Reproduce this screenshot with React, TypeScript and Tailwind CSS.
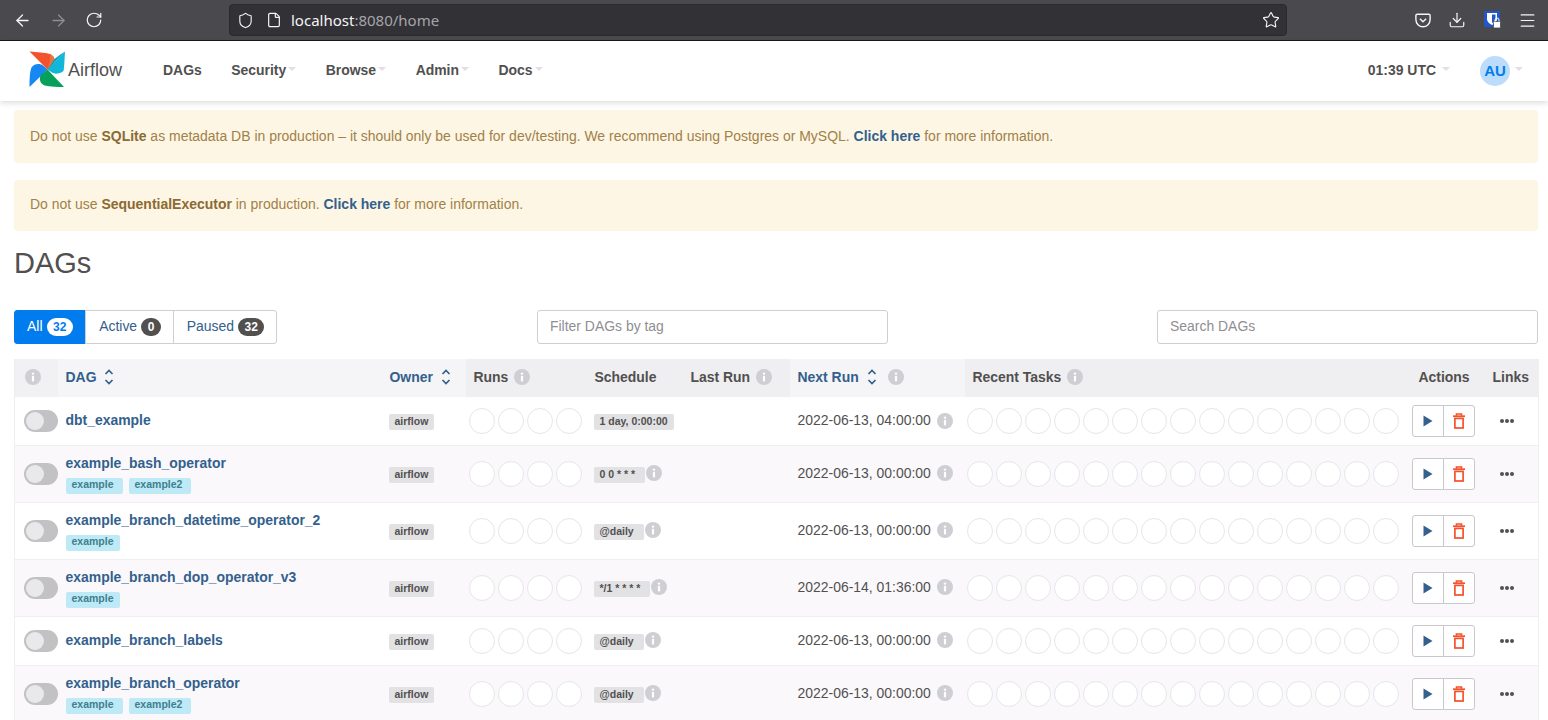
import { ArrowLeft, ArrowRight, RotateCw, Shield, File, Star, Download, Menu } from "lucide-react";

interface DagRow {
  name: string;
  tags: string[];
  schedule: string;
  scheduleInfo: boolean;
  nextRun: string;
}

const dags: DagRow[] = [
  { name: "dbt_example", tags: [], schedule: "1 day, 0:00:00", scheduleInfo: false, nextRun: "2022-06-13, 04:00:00" },
  { name: "example_bash_operator", tags: ["example", "example2"], schedule: "0 0 * * *", scheduleInfo: true, nextRun: "2022-06-13, 00:00:00" },
  { name: "example_branch_datetime_operator_2", tags: ["example"], schedule: "@daily", scheduleInfo: true, nextRun: "2022-06-13, 00:00:00" },
  { name: "example_branch_dop_operator_v3", tags: ["example"], schedule: "*/1 * * * *", scheduleInfo: true, nextRun: "2022-06-14, 01:36:00" },
  { name: "example_branch_labels", tags: [], schedule: "@daily", scheduleInfo: true, nextRun: "2022-06-13, 00:00:00" },
  { name: "example_branch_operator", tags: ["example", "example2"], schedule: "@daily", scheduleInfo: true, nextRun: "2022-06-13, 00:00:00" },
];

function Caret() {
  return <span className="ml-[2px] inline-block h-0 w-0 -translate-y-[2px] border-x-[4px] border-t-[4px] border-x-transparent border-t-[#e8dce8] align-middle" />;
}

function InfoIcon() {
  return (
    <svg width="16" height="16" viewBox="0 0 16 16" className="shrink-0">
      <circle cx="8" cy="8" r="8" fill="#cfced3" />
      <circle cx="8" cy="4.6" r="1.2" fill="#fff" />
      <rect x="6.9" y="6.8" width="2.2" height="5.6" fill="#fff" />
    </svg>
  );
}

function SortIcon() {
  return (
    <svg width="12" height="18" viewBox="0 0 12 18" fill="none" stroke="#33608c" strokeWidth="1.7" className="shrink-0">
      <path d="M2.5 6 L6 2.5 L9.5 6" />
      <path d="M2.5 12 L6 15.5 L9.5 12" />
    </svg>
  );
}

function Logo() {
  return (
    <svg width="37" height="37" viewBox="29 50.5 37 37" className="-mt-[2px] shrink-0">
      <path d="M29.5 51 C37 52 45 52 50 53.5 C54 55 56 60 53.5 63 L47.5 69 Z" fill="#f2532d" />
      <path d="M50 53.5 C54 55 56 60 53.5 63 L47.5 69 L50 60 Z" fill="#e8763a" />
      <path d="M65 51 C64.5 58 64.5 66 63.5 70.5 C60 73.5 54 74 52 72 L47.5 69 Z" fill="#11b6d9" />
      <path d="M65 51 L47.5 69 L53 61 C54 58 59 55 65 51 Z" fill="#0ca0c6" />
      <path d="M29.5 86.5 C29.5 80 29.5 72 31.5 67 C34 63 40 62.5 43 65 L47.5 69 Z" fill="#1687f5" />
      <path d="M64 86.5 C58 86.5 50 86.5 44.5 85 C40 83 38.5 78 41 74.5 L47.5 69 Z" fill="#06a05a" />
    </svg>
  );
}

function PocketIcon() {
  return (
    <svg width="16" height="15" viewBox="0 0 18 16" fill="none" stroke="#f5f5f7" strokeWidth="1.6">
      <path d="M2.5 1 H15.5 A1.5 1.5 0 0 1 17 2.5 V7 A8 8 0 0 1 1 7 V2.5 A1.5 1.5 0 0 1 2.5 1 Z" />
      <path d="M5.5 6 L9 9.5 L12.5 6" />
    </svg>
  );
}

function BitwardenIcon() {
  return (
    <svg width="18" height="18" viewBox="0 0 18 18">
      <rect width="16" height="16" fill="#2257c9" />
      <path d="M3 2 H13 V8 C13 11 10 13 8 14 C6 13 3 11 3 8 Z" fill="#fff" />
      <path d="M8 3.5 H11.5 V8 C11.5 9.5 10 11 8 12 Z" fill="#2257c9" />
      <rect x="9.5" y="10.5" width="7" height="6.5" rx="1" fill="#fff" stroke="#4a494e" strokeWidth="0.8" />
      <path d="M11 10.5 V9 A2 2 0 0 1 15 9 V10.5" fill="none" stroke="#f5f5f7" strokeWidth="1" />
    </svg>
  );
}

function TrashIcon() {
  return (
    <svg width="14" height="16" viewBox="0 0 14 16" fill="none" stroke="#f5512c" strokeWidth="1.7">
      <path d="M1 3.2 H13" />
      <path d="M4.5 2.8 V1 H9.5 V2.8" />
      <rect x="2.9" y="5.4" width="8.2" height="9.6" />
    </svg>
  );
}

function Circles({ count, className }: { count: number; className: string }) {
  return (
    <div className={className}>
      {Array.from({ length: count }).map((_, i) => (
        <span key={i} className="h-[26px] w-[26px] rounded-full border border-[#e6e5e8] bg-white" />
      ))}
    </div>
  );
}

function Pill({ text, className }: { text: string; className?: string }) {
  return (
    <span className={`inline-block h-[16px] translate-y-[1px] rounded-[2px] bg-[#e2e1e4] pl-[6px] text-[10.5px] font-bold leading-[14px] text-[#51504f] ${className ?? "pr-[6px]"}`}>
      {text}
    </span>
  );
}

function Tab({ label, count, active, className }: { label: string; count: number; active?: boolean; className: string }) {
  return (
    <div className={`flex h-[34px] items-center justify-center gap-[4px] border pb-[1px] ${className} ${active ? "border-[#017cee] bg-[#017cee] text-white" : "border-[#cfced2] bg-white text-[#33608c]"}`}>
      {label}
      <span className={`rounded-full px-[6.5px] text-[12px] font-bold leading-[18px] ${active ? "bg-white text-[#017cee]" : "bg-[#51504f] text-white"}`}>{count}</span>
    </div>
  );
}

export default function App() {
  const th = "h-[38px] px-2 pb-[2px] text-left text-[13.95px] font-bold";
  const td = "border-b border-[#efeef1] align-middle";

  return (
    <div className="h-[720px] overflow-hidden bg-white font-['Liberation_Sans',Arial,sans-serif] text-[13.95px] text-[#51504f]">
      {/* browser toolbar */}
      <div className="flex h-[41px] items-center border-b border-[#17171a] bg-[#4a494e] text-[#f5f5f7]">
        <div className="flex w-[229px] items-center pl-[13px]">
          <ArrowLeft size={19} strokeWidth={1.6} />
          <ArrowRight size={19} strokeWidth={1.6} className="ml-[17px] text-[#8e8d92]" />
          <RotateCw size={18} strokeWidth={1.6} className="ml-[17px]" />
        </div>
        <div className="flex h-[32px] w-[1058px] items-center rounded-[4px] border border-[#2a2a2e] bg-[#323136] pl-[7px] pr-[6px]">
          <Shield size={17} strokeWidth={1.6} />
          <File size={16} strokeWidth={1.8} className="ml-[12px]" />
          <span className="ml-[9px] font-['Noto_Sans',sans-serif] text-[15px]">
            localhost<span className="text-[#a6a5aa]">:8080/home</span>
          </span>
          <Star size={18} strokeWidth={1.5} className="ml-auto" />
        </div>
        <div className="ml-[128px] flex items-center">
          <PocketIcon />
          <Download size={18} strokeWidth={1.6} className="ml-[17px]" />
          <span className="ml-[18px]"><BitwardenIcon /></span>
          <Menu size={19} strokeWidth={1.5} className="ml-[16px]" />
        </div>
      </div>

      {/* navbar */}
      <nav className="flex h-[60px] items-center bg-white pb-[2px] pl-[29px] pr-[25px] font-bold shadow-[0_2px_6px_rgba(0,0,0,0.14)]">
        <Logo />
        <span className="ml-[2px] text-[18px] font-normal text-[#51504f]">Airflow</span>
        <div className="ml-[41px] flex items-center gap-[29.5px]">
          <span>DAGs</span>
          <span>Security<Caret /></span>
          <span>Browse<Caret /></span>
          <span>Admin<Caret /></span>
          <span>Docs<Caret /></span>
        </div>
        <span className="ml-auto">01:39 UTC</span>
        <span className="ml-[4px]"><Caret /></span>
        <span className="ml-[30px] mt-[2px] flex h-[30px] w-[30px] items-center justify-center rounded-full bg-[#bcdcfb] text-[15px] text-[#017cee]">AU</span>
        <span className="ml-[3px]"><Caret /></span>
      </nav>

      <main className="pl-[14px] pr-[10px]">
        <div className="mt-[9px] flex h-[53px] items-center rounded-[4px] bg-[#fef6e4] px-[16px] text-[13.97px] text-[#a08148]">
          <p>
            Do not use <b className="text-[#8b6a33]">SQLite</b> as metadata DB in production – it should only be used for dev/testing. We recommend using Postgres or MySQL.{" "}
            <b className="text-[#33608c]">Click here</b> for more information.
          </p>
        </div>
        <div className="mt-[17px] flex h-[51px] items-center rounded-[4px] bg-[#fef6e4] px-[16px] pb-[2px] text-[13.97px] text-[#a08148]">
          <p>
            Do not use <b className="text-[#8b6a33]">SequentialExecutor</b> in production. <b className="text-[#33608c]">Click here</b> for more information.
          </p>
        </div>

        <h1 className="mt-[14px] text-[29px] leading-[36px]">DAGs</h1>

        <div className="mt-[29px] flex items-center">
          <div className="flex">
            <Tab label="All" count={32} active className="w-[72px] rounded-l-[3px]" />
            <Tab label="Active" count={0} className="-ml-px w-[89px] pl-[1px]" />
            <Tab label="Paused" count={32} className="-ml-px w-[104px] rounded-r-[3px] pl-[1px]" />
          </div>
          <input readOnly placeholder="Filter DAGs by tag" className="ml-[260px] h-[34px] w-[351px] rounded-[3px] border border-[#cfced2] px-[12px] pb-[2px] text-[13.95px] placeholder:text-[#8f8e92]" />
          <input readOnly placeholder="Search DAGs" className="ml-auto h-[34px] w-[381px] rounded-[3px] border border-[#cfced2] px-[12px] pb-[2px] text-[13.95px] placeholder:text-[#8f8e92]" />
        </div>

        <table className="mt-[15px] w-[1524px] table-fixed border-x border-[#efeef1]">
          <colgroup>
            <col className="w-[43px]" />
            <col className="w-[324px]" />
            <col className="w-[84px]" />
            <col className="w-[121px]" />
            <col className="w-[96px]" />
            <col className="w-[107px]" />
            <col className="w-[175px]" />
            <col className="w-[446px]" />
            <col className="w-[74px]" />
            <col className="w-[54px]" />
          </colgroup>
          <thead>
            <tr>
              <th className={`${th} bg-[#f1f0f3] pl-[10px]`}><InfoIcon /></th>
              <th className={`${th} bg-[#f5f4f6] text-[#33608c]`}>
                <span className="flex items-center gap-[7px]">DAG <SortIcon /></span>
              </th>
              <th className={`${th} bg-[#f5f4f6] text-[#33608c]`}>
                <span className="flex items-center gap-[7px]">Owner <SortIcon /></span>
              </th>
              <th className={`${th} bg-[#efeef1]`}>
                <span className="flex items-center gap-[6px]">Runs <InfoIcon /></span>
              </th>
              <th className={`${th} bg-[#efeef1]`}>Schedule</th>
              <th className={`${th} bg-[#efeef1]`}>
                <span className="flex items-center gap-[6px]">Last Run <InfoIcon /></span>
              </th>
              <th className={`${th} bg-[#f5f4f6] text-[#33608c]`}>
                <span className="flex items-center gap-[7px]">Next Run <SortIcon /><span className="ml-[3px]"><InfoIcon /></span></span>
              </th>
              <th className={`${th} bg-[#efeef1]`}>
                <span className="flex items-center gap-[6px]">Recent Tasks <InfoIcon /></span>
              </th>
              <th className={`${th} bg-[#efeef1]`}>Actions</th>
              <th className={`${th} bg-[#efeef1]`}>Links</th>
            </tr>
          </thead>
          <tbody>
            {dags.map((dag, i) => (
              <tr key={dag.name} className={`${dag.tags.length ? "h-[57px]" : i === 0 ? "h-[48px]" : "h-[49px]"} ${i % 2 ? "bg-[#faf8fb]" : "bg-white"}`}>
                <td className={`${td} pl-[9px]`}>
                  <div className="relative h-[22px] w-[34px] rounded-full bg-[#c2c1c4]">
                    <span className="absolute left-[2px] top-[2px] h-[18px] w-[18px] rounded-full bg-[#e9e8eb]" />
                  </div>
                </td>
                <td className={`${td} px-2 ${dag.tags.length ? "" : "pb-[2px]"}`}>
                  <div className="text-[13.95px] font-bold leading-[20px] text-[#33608c]">{dag.name}</div>
                  {dag.tags.length > 0 && (
                    <div className="mt-[5px] flex gap-[6px]">
                      {dag.tags.map((tag) => (
                        <span key={tag} className={`h-[16px] rounded-[2px] bg-[#bdeaf6] pl-[6px] text-[10.5px] font-bold leading-[13px] text-[#3f7f8e] ${dag.tags.length > 1 ? "pr-[9px]" : "pr-[6px]"}`}>
                          {tag}
                        </span>
                      ))}
                    </div>
                  )}
                </td>
                <td className={`${td} pl-[7px]`}>
                  <div className="flex"><Pill text="airflow" /></div>
                </td>
                <td className={td}><Circles count={4} className="flex gap-[3px] pl-[3px]" /></td>
                <td className={`${td} pl-[7px]`}>
                  <div className="flex items-center">
                    <Pill text={dag.schedule} className={dag.scheduleInfo ? "pr-[10px]" : "pr-[6px]"} />
                    {dag.scheduleInfo && <span className="-translate-y-px pl-[1px]"><InfoIcon /></span>}
                  </div>
                </td>
                <td className={td} />
                <td className={`${td} px-2`}>
                  <div className="flex items-center gap-[6px]">{dag.nextRun} <InfoIcon /></div>
                </td>
                <td className={td}><Circles count={15} className="flex gap-[3px] pl-[2px]" /></td>
                <td className={`${td} pl-[1px]`}>
                  <div className="flex h-[32px] w-[63px] rounded-[3px] border border-[#c9c8cc] bg-white">
                    <span className="flex w-[31px] items-center justify-center border-r border-[#c9c8cc]">
                      <svg width="10" height="12" viewBox="0 0 10 12"><path d="M0.5 0.5 L9.5 6 L0.5 11.5 Z" fill="#33608c" /></svg>
                    </span>
                    <span className="flex flex-1 items-center justify-center"><TrashIcon /></span>
                  </div>
                </td>
                <td className={`${td} pr-[9px]`}>
                  <div className="flex justify-center gap-[1px]">
                    <span className="h-[4px] w-[4px] rounded-full bg-[#51504f]" />
                    <span className="h-[4px] w-[4px] rounded-full bg-[#51504f]" />
                    <span className="h-[4px] w-[4px] rounded-full bg-[#51504f]" />
                  </div>
                </td>
              </tr>
            ))}
          </tbody>
        </table>
      </main>
    </div>
  );
}
